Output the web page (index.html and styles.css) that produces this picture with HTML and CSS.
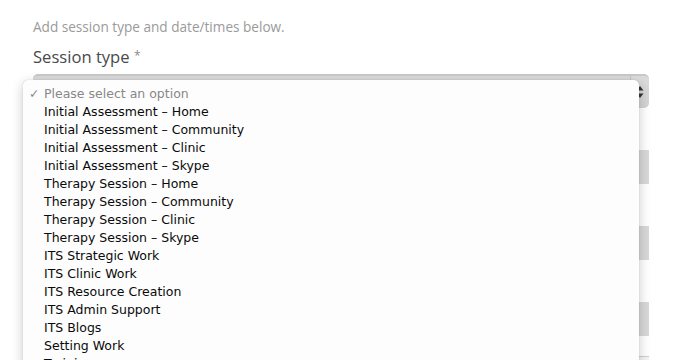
FILE: index.html
```html
<!DOCTYPE html>
<html lang="en">
<head>
    <meta charset="UTF-8">
    <meta name="viewport" content="width=device-width, initial-scale=1.0">
    <title>Add Session</title>
    <link rel="stylesheet" href="styles.css">
</head>
<body>
    <div class="form">
        <p class="intro">Add session type and date/times below.</p>

        <div class="form-group">
            <label class="field-label">Session type <span class="required">*</span></label>
            <div class="select-box">
                <span class="select-value"></span>
                <span class="stepper">
                    <svg width="8" height="14" viewBox="0 0 8 14">
                        <path d="M4 1 L7.5 5.5 H0.5 Z" fill="#333"/>
                        <path d="M4 13 L7.5 8.5 H0.5 Z" fill="#333"/>
                    </svg>
                </span>
            </div>
        </div>

        <!-- fields below are hidden by the open popup -->
        <div class="form-group">
            <div class="field-label"></div>
            <div class="input-box"></div>
        </div>

        <div class="form-group">
            <div class="field-label"></div>
            <div class="input-box"></div>
        </div>

        <div class="form-group">
            <div class="field-label"></div>
            <div class="input-box"></div>
        </div>

        <div class="form-group last">
            <div class="input-box outline"></div>
        </div>
    </div>

    <!-- Native select popup, open over the form -->
    <ul class="select-menu">
        <li class="option placeholder"><span class="check">&#10003;</span>Please select an option</li>
        <li class="option">Initial Assessment – Home</li>
        <li class="option">Initial Assessment – Community</li>
        <li class="option">Initial Assessment – Clinic</li>
        <li class="option">Initial Assessment – Skype</li>
        <li class="option">Therapy Session – Home</li>
        <li class="option">Therapy Session – Community</li>
        <li class="option">Therapy Session – Clinic</li>
        <li class="option">Therapy Session – Skype</li>
        <li class="option">ITS Strategic Work</li>
        <li class="option">ITS Clinic Work</li>
        <li class="option">ITS Resource Creation</li>
        <li class="option">ITS Admin Support</li>
        <li class="option">ITS Blogs</li>
        <li class="option">Setting Work</li>
        <li class="option">Training</li>
    </ul>
</body>
</html>
```

FILE: styles.css
```css
* {
    margin: 0;
    padding: 0;
    box-sizing: border-box;
}

body {
    background: #ffffff;
    font-family: 'Open Sans', 'Noto Sans', sans-serif;
    overflow: hidden;
    height: 360px;
}

.form {
    padding: 16px 37px 0 33px;
}

.intro {
    font-size: 13.6px;
    line-height: 20px;
    color: #9a9a9a;
    margin-bottom: 7px;
    padding-top: 1px;
}

.form-group {
    margin-bottom: 12px;
}

.field-label {
    display: block;
    height: 23px;
    font-size: 16.6px;
    line-height: 22px;
    color: #4a4a4a;
    margin-bottom: 7px;
    padding-top: 1px;
}

.required {
    font-size: 12px;
    color: #8a8a8a;
    vertical-align: 3px;
}

.select-box {
    display: flex;
    height: 34px;
    background: linear-gradient(#dcdcdc, #d2d2d2);
    border-top: 2px solid #c9c9c9;
    border-radius: 5px;
}

.select-value {
    flex: 1;
}

.stepper {
    width: 19px;
    border-left: 1px solid #c4c4c4;
    display: flex;
    align-items: center;
    justify-content: center;
}

.input-box {
    height: 34px;
    background: #d8d8d8;
}

.form-group.last {
    padding-top: 8px;
}

.input-box.outline {
    background: #f4f4f4;
    border-top: 1px solid #cfcfcf;
}

.select-menu {
    position: absolute;
    left: 23px;
    top: 80px;
    width: 616px;
    height: 300px;
    list-style: none;
    background: #fdfdfd;
    border-radius: 5px 5px 0 0;
    padding-top: 5px;
    box-shadow: 0 3px 12px rgba(0, 0, 0, 0.22), 0 0 1px rgba(0, 0, 0, 0.25);
    font-family: 'DejaVu Sans', sans-serif;
    font-size: 12.5px;
}

.option {
    position: relative;
    height: 18px;
    line-height: 18px;
    padding-left: 21px;
    color: #0a0a0a;
    white-space: nowrap;
}

.option.placeholder {
    color: #888;
}

.check {
    position: absolute;
    left: 6px;
    color: #888;
}
```
